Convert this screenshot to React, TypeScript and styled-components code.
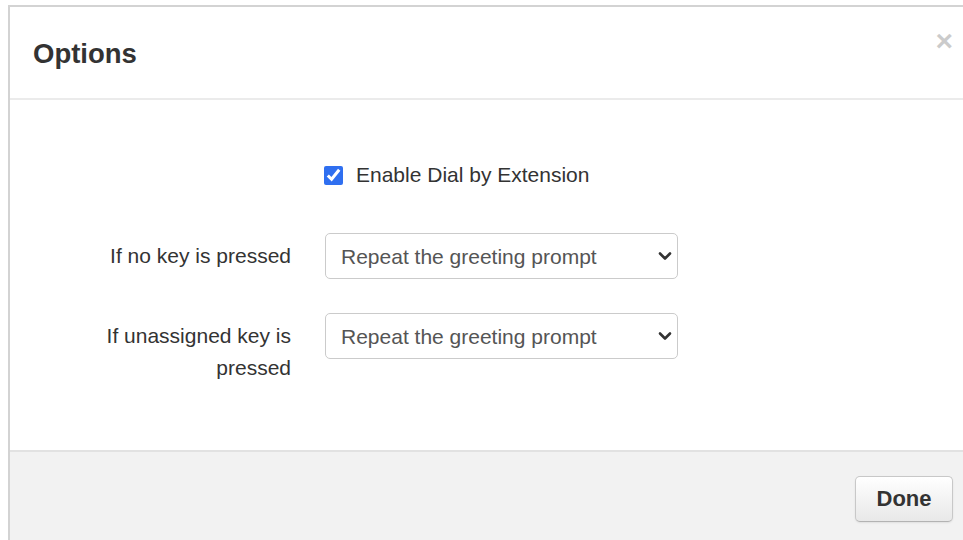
import styled, {createGlobalStyle} from "styled-components";


const GlobalStyle = createGlobalStyle`
    html, body{
        margin: 0;
        padding: 0;
        overflow: hidden;
        background-color: white;
    }
    body{
        font-family: 'Liberation Sans', Arial, Helvetica, sans-serif;
    }
    *{
        box-sizing: border-box;
    }
`

const REPEAT_OPTIONS = [
    "Repeat the greeting prompt",
    "Transfer to operator",
    "Hang up",
];


function Chevron(){
    return(
        <ChevronIcon width="14" height="10" viewBox="0 0 14 10">
            <path d="M2 2.5 L7 7.5 L12 2.5" fill="none" stroke="#333" strokeWidth="2.6" strokeLinecap="round" strokeLinejoin="round"/>
        </ChevronIcon>
    )
}


function SelectField(props:{label: string, value: string}){
    return(
        <FormGroup>
            <FieldLabel>{props.label}</FieldLabel>
            <SelectWrapper>
                <Select defaultValue={props.value}>
                    {REPEAT_OPTIONS.map(option => <option key={option}>{option}</option>)}
                </Select>
                <Chevron/>
            </SelectWrapper>
        </FormGroup>
    )
}


function App(){

    return(
        <>
            <GlobalStyle/>
            <Dialog>
                <Header>
                    <Title>Options</Title>
                    <CloseButton aria-label="Close">×</CloseButton>
                </Header>
                <Body>
                    <FormGroup>
                        <CheckboxRow>
                            <Checkbox type="checkbox" defaultChecked/>
                            <CheckboxText>Enable Dial by Extension</CheckboxText>
                        </CheckboxRow>
                    </FormGroup>
                    <SelectField label="If no key is pressed" value="Repeat the greeting prompt"/>
                    <SelectField label="If unassigned key is pressed" value="Repeat the greeting prompt"/>
                </Body>
                <Footer>
                    <DoneButton>Done</DoneButton>
                </Footer>
            </Dialog>
        </>
    )
}

const Dialog = styled.div`
    margin: 5px 0 0 8px;
    width: 968px;
    background-color: white;
    border: 2px solid #d3d3d3;
    border-bottom: none;
    display: flex;
    flex-direction: column;
`
const Header = styled.div`
    height: 93px;
    padding: 0 21px 0 23px;
    border-bottom: 2px solid #ebebeb;
    display: flex;
    align-items: center;
    justify-content: space-between;
`
const Title = styled.h4`
    margin: 0;
    padding-top: 2px;
    font-size: 27.5px;
    font-weight: bold;
    color: #333;
`
const CloseButton = styled.button`
    align-self: flex-start;
    margin-top: 19px;
    padding: 0;
    border: none;
    background: none;
    font-family: inherit;
    font-size: 30px;
    font-weight: bold;
    line-height: 1;
    color: #000;
    opacity: 0.2;
    cursor: pointer;
`
const Body = styled.div`
    padding: 61px 21px 66px 81px;
    display: flex;
    flex-direction: column;
    gap: 34px;
`
const FormGroup = styled.div`
    display: grid;
    grid-template-columns: 200px 353px;
    column-gap: 34px;
    align-items: start;
    &:first-child{
        margin-bottom: 10px;
    }
`
const CheckboxRow = styled.label`
    grid-column: 2;
    margin-left: -1px;
    height: 28px;
    display: flex;
    align-items: center;
    cursor: pointer;
`
const Checkbox = styled.input`
    margin: 0 13px 0 0;
    width: 19px;
    height: 19px;
    accent-color: #2f6ff0;
`
const CheckboxText = styled.span`
    font-size: 21px;
    color: #333;
`
const FieldLabel = styled.div`
    padding-top: 7px;
    text-align: right;
    font-size: 21px;
    line-height: 32px;
    color: #333;
`
const SelectWrapper = styled.div`
    position: relative;
`
const Select = styled.select`
    display: block;
    width: 100%;
    height: 46px;
    padding: 0 36px 0 15px;
    border: 1px solid #cbcbcb;
    border-radius: 5px;
    background-color: white;
    font-family: inherit;
    font-size: 21px;
    color: #555;
    appearance: none;
    outline: none;
`
const ChevronIcon = styled.svg`
    position: absolute;
    right: 6px;
    top: 18px;
    pointer-events: none;
`
const Footer = styled.div`
    padding: 24px 21px 30px;
    border-top: 2px solid #e2e2e2;
    background-color: #f2f2f2;
    display: flex;
    justify-content: flex-end;
`
const DoneButton = styled.button`
    width: 98px;
    height: 46px;
    border: 1px solid #c8c8c8;
    border-bottom-color: #b3b3b3;
    border-radius: 5px;
    background-image: linear-gradient(to bottom, #ffffff, #e8e8e8);
    box-shadow: inset 0 1px 0 rgba(255,255,255,0.3), 0 1px 2px rgba(0,0,0,0.08);
    font-family: inherit;
    font-size: 22px;
    font-weight: bold;
    color: #333;
    cursor: pointer;
`

export default App;
